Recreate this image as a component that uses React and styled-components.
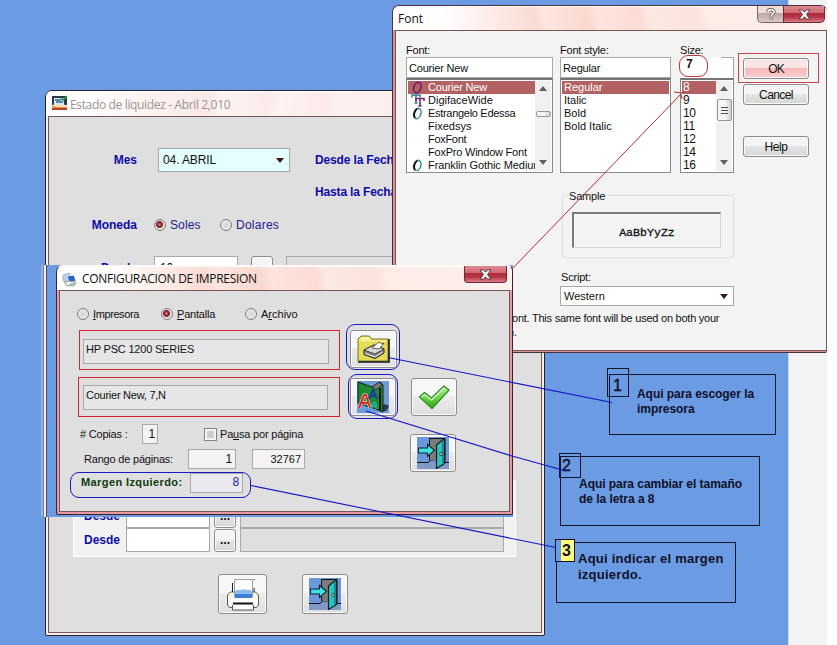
import React from "react";
import styled, { createGlobalStyle, css } from "styled-components";

const Global = createGlobalStyle`
  * { box-sizing: border-box; }
  body { margin: 0; overflow: hidden; background: #fff; font-family: "Liberation Sans", Arial, sans-serif; font-size: 11px; color: #111; }
`;

/* ---------- desktop ---------- */
const Desktop = styled.main`
  position: relative;
  display: flex;
  width: 837px;
  height: 645px;
  overflow: hidden;
  background: #fff;
`;
const Wallpaper = styled.div`
  width: 788px;
  background: #6b9be2;
`;
const SideStrip = styled.div`
  width: 39px;
  background: #f3f3f3;
  border-left: 1px solid #d5d9d8;
`;

/* ---------- window chrome ---------- */
const WindowFrame = styled.section`
  position: absolute;
  left: ${(p) => p.$x}px;
  top: ${(p) => p.$y}px;
  width: ${(p) => p.$w}px;
  height: ${(p) => p.$h}px;
  display: flex;
  flex-direction: column;
  padding: 0 2px 2px;
  border: 1px solid ${(p) => p.$edge || "#26222c"};
  ${(p) => p.$noTop && css`border-top-color: #fff6f3;`}
  ${(p) => p.$flushRight && css`border-right: 0; padding-right: 0; padding-bottom: 1px;`}
  border-radius: 7px 6px 2px 2px;
  background: ${(p) => p.$rim || "#f8eeec"};
  overflow: hidden;
`;
const TitleBar = styled.header`
  display: flex;
  flex: none;
  height: ${(p) => p.$h}px;
  margin: 0 ${(p) => (p.$flushRight ? 0 : -2)}px 0 -2px;
  padding-left: ${(p) => p.$pl || 4}px;
  background: ${(p) =>
    p.$faded
      ? "linear-gradient(100deg, #fffdfd 0 10%, #fdf1ef 22%, #fae9e7 33%, #fdf3f1 35%, #faebe9 45%, #fdf4f3 47%, #fbeae8 56%, #fdf1ef 58%, #fbe6e4 100%)"
      : "linear-gradient(80deg, #fffdfd 0 12%, #fdebe6 24%, #fadbd3 33%, #fde6df 35%, #f9d8cf 45%, #fde4dd 47%, #fadcd5 57%, #fde8e2 59%, #fce2dc 70%, #fdebe6 72%, #fdf0ed 100%)"};
  box-shadow: inset 0 1px 0 #fff;
`;
const TitleText = styled.h1`
  flex: 1;
  margin: ${(p) => p.$mt}px 0 0 ${(p) => p.$ml || 0}px;
  font: 400 12px/16px "Open Sans", "Noto Sans", sans-serif;
  letter-spacing: ${(p) => p.$ls || 0}px;
  color: ${(p) => p.$c || "#111"};
  white-space: nowrap;
`;
const CaptionButton = styled.button`
  display: flex;
  align-items: center;
  justify-content: center;
  width: ${(p) => p.$w}px;
  height: ${(p) => p.$h}px;
  margin: 0 ${(p) => p.$mr || 0}px 0 0;
  padding: 0;
  border: 1px solid #6b2a35;
  border-top: 0;
  border-radius: ${(p) => (p.$help ? "0 0 0 5px" : p.$round ? "0 0 4px 4px" : "0 0 5px 0")};
  background: ${(p) =>
    p.$help
      ? "linear-gradient(#efdcd8 0 45%, #bda7a5 46%, #dfc9c6)"
      : "linear-gradient(#dc8b91 0, #cf6670 44%, #a92c3b 46%, #b73748 70%, #dc7f88)"};
  ${(p) => p.$help && css`border-color: #7c6264; border-right: 0;`}
`;
const Body = styled.div`
  flex: 1;
  display: flex;
  flex-direction: column;
  border: 1px solid #745656;
  background: ${(p) => p.$bg || "#dfdfdf"};
  min-height: 0;
`;

/* ---------- layout ---------- */
const Row = styled.div`
  display: flex;
  flex: none;
  align-items: ${(p) => p.$align || "center"};
  height: ${(p) => p.$h}px;
  margin-top: ${(p) => p.$mt || 0}px;
  padding-left: ${(p) => p.$pl || 0}px;
`;
const Column = styled.div`
  display: flex;
  flex-direction: column;
  flex: none;
  width: ${(p) => p.$w}px;
  margin-left: ${(p) => p.$ml || 0}px;
`;

/* ---------- controls ---------- */
const Text = styled.span`
  flex: none;
  width: ${(p) => (p.$w ? p.$w + "px" : "auto")};
  margin-left: ${(p) => p.$ml || 0}px;
  font-size: ${(p) => p.$s || 11}px;
  line-height: ${(p) => p.$lh || 14}px;
  font-weight: ${(p) => (p.$b ? 700 : 400)};
  color: ${(p) => p.$c || "#111"};
  letter-spacing: ${(p) => (p.$ls === undefined ? -0.2 : p.$ls)}px;
  text-align: ${(p) => (p.$right ? "right" : "left")};
  white-space: nowrap;
`;
const NavyLabel = styled(Text).attrs((p) => ({ $s: 12, $b: true, $c: "#0d0da8", $ls: p.$ls || 0 }))``;
const Field = styled.div`
  display: flex;
  flex: none;
  align-items: center;
  justify-content: ${(p) => (p.$right ? "flex-end" : "flex-start")};
  width: ${(p) => p.$w}px;
  height: ${(p) => p.$h}px;
  margin-left: ${(p) => p.$ml || 0}px;
  padding: 0 ${(p) => (p.$pr === undefined ? 3 : p.$pr)}px ${(p) => p.$pb || 0}px ${(p) => (p.$pad === undefined ? 3 : p.$pad)}px;
  border: 1px solid #a9a9a9;
  background: ${(p) => p.$bg || "#fff"};
`;
const Combo = styled(Field)`
  justify-content: space-between;
  padding-right: 5px;
`;
const Arrow = styled.i`
  border: 4px solid transparent;
  border-width: 5px 4.5px 0;
  border-top-color: #3a1a18;
`;
const PushButton = styled.button`
  display: flex;
  flex: none;
  align-items: center;
  justify-content: center;
  width: ${(p) => p.$w}px;
  height: ${(p) => p.$h}px;
  margin: ${(p) => p.$mt || 0}px 0 0 ${(p) => p.$ml || 0}px;
  padding: 0;
  font: ${(p) => (p.$b ? 700 : 400)} 12px "Liberation Sans", sans-serif;
  letter-spacing: ${(p) => p.$ls || 0}px;
  color: #111;
  border: 1px solid #8d8d8d;
  border-radius: 3px;
  box-shadow: inset 0 0 0 1px #fafafa;
  background: ${(p) =>
    p.$hot
      ? "linear-gradient(#fbe4e4 0 48%, #f7b9bb 50%, #fbcfd0)"
      : "linear-gradient(#f4f4f4 0 48%, #e4e4e4 50%, #d6d6d6)"};
`;
const IconButton = styled(PushButton)`
  background: linear-gradient(#f7f7f7 0 45%, #ececec 50%, #dedede);
`;
const RadioWrap = styled.label`
  display: flex;
  flex: none;
  align-items: center;
  gap: 4px;
  width: ${(p) => p.$w}px;
`;
const Dot = styled.i`
  flex: none;
  width: 12px;
  height: 12px;
  border: 1px solid #7e7e7e;
  border-radius: 50%;
  background: ${(p) =>
    p.$on
      ? "radial-gradient(circle at 45% 45%, #d98080 0, #8e1f26 2.4px, #7d2227 3.1px, #e6e0e0 3.8px)"
      : "radial-gradient(circle, #d5d5d5, #efefef)"};
`;
const CheckBox = styled.i`
  flex: none;
  width: 13px;
  height: 13px;
  margin: 0 3px 0 46px;
  border: 1px solid #838383;
  box-shadow: inset 0 0 0 2px #f3f3f3;
  background: #cfcfcf;
`;
const GroupPanel = styled.div`
  flex: none;
  width: 443px;
  height: 77px;
  margin: 200px 0 0 24px;
  padding-top: 24px;
  background: #f2f2f2;
  border: solid #fff;
  border-width: 0 1px 1px;
`;
const RedFrame = styled.div`
  flex: none;
  width: ${(p) => p.$w}px;
  height: 40px;
  margin: ${(p) => p.$mt || 0}px 0 0 ${(p) => p.$ml}px;
  padding: ${(p) => p.$p};
  border: 1px solid #d3252c;
`;
const BlueRing = styled.div`
  display: flex;
  flex: none;
  align-items: ${(p) => p.$align || "center"};
  justify-content: ${(p) => p.$j || "center"};
  width: ${(p) => p.$w}px;
  height: ${(p) => p.$h}px;
  margin-left: ${(p) => p.$ml}px;
  padding-left: ${(p) => p.$pl || 0}px;
  border: 1px solid #1919c4;
  border-radius: 9px;
`;

/* ---------- lists ---------- */
const ListFrame = styled.div`
  display: flex;
  height: 95px;
  padding: 1px;
  border: 1px solid #8a8a8a;
  border-top-width: 2px;
  border-top-color: #767676;
  background: #fff;
`;
const ListItems = styled.div`
  flex: 1;
  overflow: hidden;
`;
const ListRow = styled.div`
  display: flex;
  align-items: center;
  height: 13px;
  padding-left: ${(p) => (p.$pad === undefined ? 3 : p.$pad)}px;
  line-height: 13px;
  white-space: nowrap;
  letter-spacing: ${(p) => p.$ls || 0}px;
  font-size: ${(p) => p.$s || 11}px;
  color: ${(p) => (p.$on ? "#fff" : "#111")};
  background: ${(p) => (p.$on ? "#b26262" : "transparent")};
`;
const Glyph = styled.span`
  flex: none;
  width: 17px;
  height: 13px;
`;
const ScrollTrack = styled.div`
  display: flex;
  flex-direction: column;
  align-items: center;
  width: 16px;
  padding: 5px 0 6px;
  background: #f0f0f0;
`;
const ScrollArrow = styled.i`
  border: solid transparent;
  border-width: ${(p) => (p.$up ? "0 4px 5px" : "5px 4px 0")};
  border-${(p) => (p.$up ? "bottom" : "top")}-color: #606060;
  ${(p) => !p.$up && css`margin-top: auto;`}
`;
const Thumb = styled.i`
  display: flex;
  flex-direction: column;
  align-items: center;
  justify-content: center;
  gap: 2px;
  width: 15px;
  height: ${(p) => p.$h}px;
  margin-top: ${(p) => p.$mt}px;
  border: 1px solid #979797;
  border-radius: 2px;
  background: linear-gradient(90deg, #f5f5f5 50%, #d0d0d0);
`;
const Grip = styled.i`
  width: 7px;
  height: 1px;
  background: #555;
`;
const SizeField = styled(Field)`
  position: relative;
  border-left-color: #fff;
  border-bottom-color: #fff;
  border-top: 0;
`;
const SizeEdge = styled.i`
  width: 12px;
  height: 1px;
  margin: 0 -3px auto auto;
  background: #a9a9a9;
`;
const SizeMark = styled.div`
  position: absolute;
  left: -2px;
  top: -2px;
  width: 29px;
  height: 22px;
  padding-left: 6px;
  border: 1px solid #c2343a;
  border-radius: 9px;
  font: 700 12px/17px "Liberation Sans", sans-serif;
  background: #fff;
`;
const OkMark = styled.div`
  flex: none;
  width: 81px;
  height: 30px;
  margin-top: 22px;
  padding: 4px 0 0 4px;
  border: 1px solid #cc4348;
`;
const SampleGroup = styled.div`
  flex: none;
  width: 172px;
  height: 63px;
  margin: 22px 0 0 166px;
  padding: 0 0 0 8px;
  border: 1px solid #dcdcdc;
  box-shadow: inset 0 0 0 1px #fafafa;
  border-radius: 3px;
`;
const SampleTitle = styled.div`
  width: 38px;
  margin: -7px 0 8px -2px;
  background: #f3f3f3;
  line-height: 15px;
  letter-spacing: -0.2px;
`;
const SampleBox = styled.div`
  display: flex;
  align-items: center;
  justify-content: center;
  width: 149px;
  height: 36px;
  margin-left: 1px;
  padding-top: 3px;
  border: solid #7b7b7b;
  border-width: 2px 1px 1px 2px;
  border-right-color: #d4d4d4;
  border-bottom-color: #d4d4d4;
  font: 11.6px "Liberation Mono", monospace;
  -webkit-text-stroke: 0.3px #111;
`;

/* ---------- backing behind the print dialog ---------- */
const Backing = styled.div`
  position: absolute;
  left: 41px;
  top: 265px;
  width: 472px;
  height: 252px;
  background: linear-gradient(90deg, #8fb4ea 0 2px, #7a7f8a 2px 3px, #f3f0ee 3px 5px, #4a4a5c 5px 6px, #6b9be2 6px);
`;

/* ---------- notes ---------- */
const Note = styled.div`
  position: absolute;
  left: ${(p) => p.$x}px;
  top: ${(p) => p.$y}px;
  width: ${(p) => p.$w}px;
  height: ${(p) => p.$h}px;
  padding: ${(p) => p.$p};
  border: 1px solid #14142c;
  font-weight: 700;
  font-size: ${(p) => p.$s || 12}px;
  line-height: ${(p) => p.$lh || 15}px;
  letter-spacing: ${(p) => p.$ls || 0}px;
  color: #10102a;
  white-space: nowrap;
`;
const Badge = styled.div`
  position: absolute;
  left: ${(p) => p.$x}px;
  top: ${(p) => p.$y}px;
  width: ${(p) => p.$w}px;
  height: ${(p) => p.$h}px;
  padding-left: ${(p) => p.$pl}px;
  border: 1px solid #14142c;
  font-size: 16px;
  font-weight: ${(p) => (p.$b ? 700 : 400)};
  line-height: ${(p) => p.$lh}px;
  color: #10102a;
  -webkit-text-stroke: ${(p) => (p.$b ? 0 : 0.4)}px #10102a;
  ${(p) => p.$yellow && css`background: linear-gradient(90deg, #6b9be2 0 5px, #ffff7a 5px);`}
`;
const Lines = styled.svg`
  position: absolute;
  inset: 0;
  pointer-events: none;
`;

/* ---------- icons ---------- */
const CloseX = () => (
  <svg width="13" height="11" viewBox="0 0 12 10">
    <path d="M1 .8h3.2L6 2.9 7.8.8H11L7.8 5 11 9.2H7.8L6 7.100 4.200 9.2H1L4.200 5z" fill="#fff" stroke="#5e3a40" strokeWidth=".9" />
  </svg>
);
const HelpMark = () => (
  <svg width="10" height="13" viewBox="0 0 10 13">
    <path d="M2 4.300C2 .9 8 .9 8 4c0 2-2.800 2-2.800 4.200M5.200 9.600v1.900" fill="none" stroke="#54484a" strokeWidth="3.300" />
    <path d="M2 4.300C2 .9 8 .9 8 4c0 2-2.800 2-2.800 4.200M5.200 9.800v1.500" fill="none" stroke="#fff" strokeWidth="1.700" />
  </svg>
);
const OpenTypeIcon = ({ tint }) => (
  <svg width="13" height="13" viewBox="0 0 13 13">
    <ellipse cx="6.300" cy="6.500" rx="3.500" ry="5.300" transform="rotate(20 6.300 6.500)" fill="none" stroke={tint} strokeWidth="1.500" />
    <path d="M4.300 10.700C2 9 3.400 3.300 6.300 1.700" fill="none" stroke="#101018" strokeWidth="1.800" opacity={tint === "#6c1478" ? 0 : 1} />
  </svg>
);
const TrueTypeIcon = () => (
  <svg width="15" height="13" viewBox="0 0 15 13">
    <path d="M1 3.500V1h8v2.500M5 1v8M3.500 9h3" fill="none" stroke="#2e7f8c" strokeWidth="1.500" />
    <path d="M5 7V4.500h8V7M9 4.500v7.500M7.500 12h3" fill="none" stroke="#7a2474" strokeWidth="1.600" />
  </svg>
);
const AppIcon = () => (
  <svg width="17" height="16" viewBox="0 0 17 16">
    <rect x="1" y="1" width="15" height="14" fill="#2c3a4c" />
    <rect x="3" y="3" width="10" height="7" fill="#d9ecf4" />
    <path d="M4 5h6M5 7h7" stroke="#356aa8" strokeWidth="1.300" />
    <path d="M1 10l5-1 10 1v2H1z" fill="#f0e2c4" />
    <path d="M1 11l6 1h9v1H1z" fill="#e8952a" />
    <path d="M1 13h15v2H1z" fill="#b5402c" />
    <path d="M10 3l2 2 4-4" stroke="#2f9a38" strokeWidth="1.600" fill="none" />
  </svg>
);
const PrintSetupIcon = () => (
  <svg width="16" height="15" viewBox="0 0 16 15">
    <path d="M1 3l6-2 3 4-2 5-5 1-2-3z" fill="#b9cfe4" stroke="#8ba4bf" strokeWidth=".7" />
    <path d="M5 4l7-1 2 6-7 2z" fill="#2a66c8" stroke="#e9f1f8" />
    <path d="M3 10l4-1 7 1-2 4-8-.5z" fill="#eef0ee" stroke="#8a8d90" strokeWidth=".8" />
    <path d="M8 12.500l5-1" stroke="#56a853" />
  </svg>
);
const FolderPrinter = () => (
  <svg width="33" height="28" viewBox="0 0 33 28">
    <path d="M1 26V4l3-3h8l3 3h16v22z" fill="#e5db5a" stroke="#77751f" />
    <path d="M2 5l2.500-3h7L14 5z" fill="#fbf4a0" />
    <path d="M2 6h28" stroke="#fff9b0" />
    <path d="M32 4v23H1" fill="none" stroke="#151515" strokeWidth="1.600" />
    <path d="M7 15l10-5 10 4v4l-9 5.500-11-4z" fill="#8c8c86" stroke="#222" />
    <path d="M7 15l10-5 10 4-9 5z" fill="#d9d9d3" stroke="#222" strokeWidth=".8" />
    <path d="M15 13l7-6 3 2 2-1-5 6z" fill="#fff" stroke="#333" strokeWidth=".8" />
    <path d="M8 18.500l10 3.500 8-5" stroke="#f0f0e8" fill="none" />
  </svg>
);
const FontBook = () => (
  <svg width="32" height="32" viewBox="0 0 32 32">
    <rect width="32" height="32" fill="#6f9ad8" />
    <path d="M24 26l4-3 4 2-3 5h-7z" fill="#28374c" />
    <path d="M1 1l14 5 8-5 3 3v27l-7-3L1 22z" fill="#1d8a34" stroke="#10200f" />
    <path d="M15 6l7-5 3 3-6 5z" fill="#777" stroke="#222" strokeWidth=".8" />
    <path d="M23 7v23" stroke="#111" strokeWidth="2" />
    <path d="M2 27l5-13h2l4 13M4 22h7" fill="none" stroke="#fff" strokeWidth="3" />
    <path d="M2 27l5-13h2l4 13M4 22h7" fill="none" stroke="#dc2c28" strokeWidth="2.200" />
    <path d="M12 18l4-9 4 9M13 15h5" fill="none" stroke="#173f9c" strokeWidth="2" />
    <path d="M15 28v-5q2.500-3 4 0v5m-4-3h4" fill="none" stroke="#25b9a8" strokeWidth="1.500" />
  </svg>
);
const CheckIcon = () => (
  <svg width="33" height="27" viewBox="0 0 33 27">
    <defs>
      <linearGradient id="leaf" x1="0" y1="0" x2="0" y2="1">
        <stop offset="0" stopColor="#c4f3a2" />
        <stop offset=".5" stopColor="#6fd64c" />
        <stop offset="1" stopColor="#2ca31f" />
      </linearGradient>
    </defs>
    <path d="M1.500 13l5-4.500 7 5.500L26 2l5 4L14 24.500z" fill="url(#leaf)" stroke="#2f8f22" strokeLinejoin="round" strokeWidth="1.300" />
    <path d="M3.500 13l3-2.500 7 5.500L26 4" fill="none" stroke="#dcfac6" strokeWidth="1.300" />
  </svg>
);
const ExitDoor = () => (
  <svg width="32" height="32" viewBox="0 0 32 32">
    <rect width="32" height="32" fill="#6c97da" />
    <path d="M0 25h32v7H0z" fill="#8299c8" />
    <path d="M0 25.500h11l3-2.500h5M27 25.500h5" stroke="#111" fill="none" />
    <path d="M12.500 23V1.500H28V25" fill="#7c7c78" stroke="#111" />
    <path d="M19.500 8l8-6.500v25l-8 5z" fill="#2fc1bb" stroke="#0c2222" strokeWidth="1.200" />
    <path d="M26 4v22" stroke="#14817f" strokeWidth="1.500" />
    <ellipse cx="24" cy="17" rx="1.200" ry="1.800" fill="#c7f5ef" stroke="#111" strokeWidth=".7" />
    <path d="M1.500 11h9V7.500l7 5.800-7 6V16h-9z" fill="#3fe2e4" stroke="#0b2030" strokeWidth="1.100" />
  </svg>
);
const PrinterIcon = () => (
  <svg width="34" height="33" viewBox="0 0 34 33">
    <path d="M1.500 17l3-3h25l3 3v10l-2 2.500H3.500l-2-2.500z" fill="#f8f6ee" stroke="#5f5b54" />
    <path d="M8.500 19V1.500h18V19z" fill="#fdfdfd" stroke="#9da0a4" />
    <path d="M6.500 5v9M28 1v1M28 10v4" stroke="#222" />
    <path d="M9 13q8-2.500 17 0v7H9z" fill="#3f7fd4" />
    <path d="M9 13q8-2.500 17 0v3H9z" fill="#8dbcf0" />
    <path d="M3 22.500h28" stroke="#fff" strokeWidth="3" />
    <path d="M7 25.500h20" stroke="#161616" strokeWidth="2" />
    <path d="M6.500 27v5h21v-5" fill="#fff" stroke="#555" />
  </svg>
);

const fonts = [
  ["Courier New", "open", -0.2],
  ["DigifaceWide", "true", 0],
  ["Estrangelo Edessa", "open", -0.3],
  ["Fixedsys", "", 0],
  ["FoxFont", "", -0.3],
  ["FoxPro Window Font", "", -0.22],
  ["Franklin Gothic Mediur", "open", -0.08],
];

const Radio = ({ on, w, children }) => (
  <RadioWrap $w={w}>
    <Dot $on={on} />
    {children}
  </RadioWrap>
);

const AccountWindow = () => (
  <WindowFrame $x={45} $y={90} $w={500} $h={546}>
    <TitleBar $h={25} $faded $pl={5}>
      <Row $mt={4} $h={16}><AppIcon /></Row>
      <TitleText $mt={6} $ml={2} $c="#9a9494" $ls={-0.35}>Estado de liquidez - Abril 2,010</TitleText>
    </TitleBar>
    <Body>
      <Row $mt={31} $h={24}>
        <NavyLabel $w={88} $right>Mes</NavyLabel>
        <Combo $ml={21} $w={132} $h={24} $bg="#e4ffff" $pad={4}>
          <Text $s={12} $ls={-0.1}>04. ABRIL</Text>
          <Arrow />
        </Combo>
        <NavyLabel $ml={25} $ls={-0.15}>Desde la Fecha</NavyLabel>
      </Row>
      <Row $mt={12} $h={16}>
        <NavyLabel $ml={266} $ls={-0.15}>Hasta la Fecha</NavyLabel>
      </Row>
      <Row $mt={17} $h={16}>
        <NavyLabel $w={88} $right>Moneda</NavyLabel>
        <Row $pl={17} $h={16}>
          <Radio on w={66}><Text $s={12} $c="#1a1a90" $ls={0.1}>Soles</Text></Radio>
          <Radio w={80}><Text $s={12} $c="#1a1a90" $ls={0.25}>Dolares</Text></Radio>
        </Row>
      </Row>
      <Row $mt={23} $h={24}>
        <NavyLabel $w={88} $right>Desde</NavyLabel>
        <Field $ml={17} $w={84} $h={24}><Text $s={12} $ml={2}>10</Text></Field>
        <PushButton $ml={13} $w={22} $h={24}>...</PushButton>
        <Field $ml={13} $w={240} $h={24} $bg="#dfdfdf" />
      </Row>
      <GroupPanel>
        {[0, 1].map((i) => (
          <Row key={i} $h={24}>
            <NavyLabel $w={46} $right>Desde</NavyLabel>
            <Field $ml={6} $w={84} $h={24} />
            <PushButton $b $ml={4} $w={22} $h={23}>...</PushButton>
            <Field $ml={4} $w={264} $h={24} $bg="#dfdfdf" />
          </Row>
        ))}
      </GroupPanel>
      <Row $mt={17} $h={40}>
        <IconButton $ml={169} $w={49} $h={40}><PrinterIcon /></IconButton>
        <IconButton $ml={35} $w={46} $h={40}><ExitDoor /></IconButton>
      </Row>
    </Body>
  </WindowFrame>
);

const FontDialog = () => (
  <WindowFrame $x={392} $y={5} $w={435} $h={348} $flushRight $edge="#4a3038" $rim="#d98f98">
    <TitleBar $h={24} $pl={5} $flushRight>
      <TitleText $mt={5}>Font</TitleText>
      <CaptionButton $help $w={26} $h={17}><HelpMark /></CaptionButton>
      <CaptionButton $w={42} $h={17} $mr={2}><CloseX /></CaptionButton>
    </TitleBar>
    <Body $bg="#f3f3f3">
      <Row $h={142} $align="flex-start">
        <Column $ml={10} $w={147}>
          <Row $mt={11} $h={15}><Text>Font:</Text></Row>
          <Field $w={147} $h={21} $pad={2}><Text>Courier New</Text></Field>
          <ListFrame>
            <ListItems>
              {fonts.map(([name, kind, ls], i) => (
                <ListRow key={name} $on={i === 0} $ls={ls}>
                  <Glyph>
                    {kind === "open" && <OpenTypeIcon tint={i ? "#3a8f94" : "#6c1478"} />}
                    {kind === "true" && <TrueTypeIcon />}
                  </Glyph>
                  {name}
                </ListRow>
              ))}
            </ListItems>
            <ScrollTrack>
              <ScrollArrow $up />
              <Thumb $mt={20} $h={6} />
              <ScrollArrow />
            </ScrollTrack>
          </ListFrame>
        </Column>
        <Column $ml={7} $w={111}>
          <Row $mt={11} $h={15}><Text>Font style:</Text></Row>
          <Field $w={111} $h={21} $pad={2}><Text>Regular</Text></Field>
          <ListFrame>
            <ListItems>
              {["Regular", "Italic", "Bold", "Bold Italic"].map((s, i) => (
                <ListRow key={s} $on={i === 0} $pad={2}>{s}</ListRow>
              ))}
            </ListItems>
          </ListFrame>
        </Column>
        <Column $ml={9} $w={54}>
          <Row $mt={11} $h={15}><Text>Size:</Text></Row>
          <SizeField $w={54} $h={21}><SizeMark>7</SizeMark><SizeEdge /></SizeField>
          <ListFrame>
            <ListItems>
              {[8, 9, 10, 11, 12, 14, 16].map((s, i) => (
                <ListRow key={s} $on={i === 0} $s={12} $ls={-0.4} $pad={1}>{s}</ListRow>
              ))}
            </ListItems>
            <ScrollTrack>
              <ScrollArrow $up />
              <Thumb $mt={8} $h={22}><Grip /><Grip /><Grip /></Thumb>
              <ScrollArrow />
            </ScrollTrack>
          </ListFrame>
        </Column>
        <Column $ml={4} $w={81}>
          <OkMark><PushButton $hot $w={66} $h={21} $ls={-0.8}>OK</PushButton></OkMark>
          <PushButton $mt={1} $ml={5} $w={66} $h={21} $ls={-0.6}>Cancel</PushButton>
          <PushButton $mt={31} $ml={5} $w={66} $h={21} $ls={-0.4}>Help</PushButton>
        </Column>
      </Row>
      <SampleGroup>
        <SampleTitle>Sample</SampleTitle>
        <SampleBox>AaBbYyZz</SampleBox>
      </SampleGroup>
      <Row $mt={12} $h={14} $pl={165}><Text>Script:</Text></Row>
      <Row $mt={2} $h={20} $pl={164}>
        <Combo $w={174} $h={20}><Text $ls={0}>Western</Text><Arrow /></Combo>
      </Row>
      <Row $mt={5} $h={14} $pl={116}><Text $ls={-0.24}>ont. This same font will be used on both your</Text></Row>
      <Row $h={13} $pl={112}><Text>n.</Text></Row>
    </Body>
  </WindowFrame>
);

const PrintDialog = () => (
  <WindowFrame $x={56} $y={265} $w={457} $h={250} $noTop $rim="#e79aa2" $edge="#3a222c">
    <TitleBar $h={24} $pl={5}>
      <Row $mt={5} $h={16}><PrintSetupIcon /></Row>
      <TitleText $mt={5} $ml={4} $ls={-0.3}>CONFIGURACION DE IMPRESION</TitleText>
      <CaptionButton $round $w={43} $h={17} $mr={5}><CloseX /></CaptionButton>
    </TitleBar>
    <Body>
      <Row $mt={15} $h={16} $pl={17}>
        <Radio w={84}><Text $ls={-0.4}><u>I</u>mpresora</Text></Radio>
        <Radio on w={84}><Text><u>P</u>antalla</Text></Radio>
        <Radio w={84}><Text $ls={0}>A<u>r</u>chivo</Text></Radio>
      </Row>
      <Row $mt={2} $h={46} $align="flex-end">
        <RedFrame $ml={19} $w={261} $p="8px 0 0 3px">
          <Field $w={246} $h={25} $bg="#e6e6e6" $pb={6} $pad={2}><Text $ls={-0.2}>HP PSC 1200 SERIES</Text></Field>
        </RedFrame>
        <BlueRing $ml={6} $w={54} $h={46}>
          <IconButton $mt={4} $w={47} $h={38}><FolderPrinter /></IconButton>
        </BlueRing>
      </Row>
      <Row $mt={4} $h={45} $align="flex-start">
        <RedFrame $ml={18} $mt={3} $w={262} $p="7px 0 0 4px">
          <Field $w={245} $h={25} $bg="#e6e6e6" $pb={6} $pad={2}><Text $ls={-0.25}>Courier New, 7,N</Text></Field>
        </RedFrame>
        <BlueRing $ml={8} $w={50} $h={45}>
          <IconButton $w={46} $h={38}><FontBook /></IconButton>
        </BlueRing>
        <IconButton $ml={13} $mt={4} $w={46} $h={38}><CheckIcon /></IconButton>
      </Row>
      <Row $align="flex-start" $h={85}>
        <Column $w={350}>
          <Row $mt={5} $h={20} $pl={20}>
            <Text $w={62}># Copias :</Text>
            <Field $w={16} $h={20} $right $bg="#f3f3f3" $pr={2}><Text $s={12}>1</Text></Field>
            <CheckBox />
            <Text>Pa<u>u</u>sa por página</Text>
          </Row>
          <Row $mt={5} $h={20} $pl={24}>
            <Text $w={104}>Rango de páginas:</Text>
            <Field $w={48} $h={20} $right $bg="#f3f3f3"><Text $s={12}>1</Text></Field>
            <Field $ml={16} $w={53} $h={20} $right $bg="#f3f3f3"><Text $ls={0}>32767</Text></Field>
          </Row>
          <Row $mt={3} $h={26}>
            <BlueRing $ml={10} $w={181} $h={26} $pl={10} $j="flex-start" $align="flex-start">
              <Text $w={109} $b $lh={19} $c="#0c3d10" $ls={0.4}>Margen Izquierdo:</Text>
              <Field $w={53} $h={20} $right $bg="#e9e9ee" $pb={2}><Text $s={12} $c="#2222b4">8</Text></Field>
            </BlueRing>
          </Row>
        </Column>
        <IconButton $mt={15} $w={46} $h={38}><ExitDoor /></IconButton>
      </Row>
    </Body>
  </WindowFrame>
);

export default function App() {
  return (
    <>
      <Global />
      <Desktop>
        <Wallpaper />
        <SideStrip />
        <AccountWindow />
        <FontDialog />
        <Backing />
        <PrintDialog />
        <Note $x={609} $y={374} $w={167} $h={61} $p="12px 0 0 27px" $ls={-0.05}>Aqui para escoger la<br />impresora</Note>
        <Badge $x={607} $y={368} $w={22} $h={29} $pl={5} $lh={34}>1</Badge>
        <Note $x={560} $y={456} $w={200} $h={70} $p="20px 0 0 18px" $ls={-0.04}>Aqui para cambiar el tamaño<br />de la letra a 8</Note>
        <Badge $x={559} $y={453} $w={22} $h={25} $pl={2} $lh={24}>2</Badge>
        <Note $x={556} $y={542} $w={180} $h={61} $p="8px 0 0 21px" $s={13} $lh={16} $ls={0.25}>Aqui indicar el margen<br />izquierdo.</Note>
        <Badge $x={555} $y={539} $w={20} $h={23} $pl={6} $lh={22} $b $yellow>3</Badge>
        <Lines width="837" height="645">
          <path d="M512 269L681 94M674 92l9 1M681 94l1 5" fill="none" stroke="#bb2a30" />
          <path d="M388 357.500L612 402.500M366 411L512 456L566 471M251 485.500L556 547.500" fill="none" stroke="#1414c8" strokeWidth="1.100" />
        </Lines>
      </Desktop>
    </>
  );
}
